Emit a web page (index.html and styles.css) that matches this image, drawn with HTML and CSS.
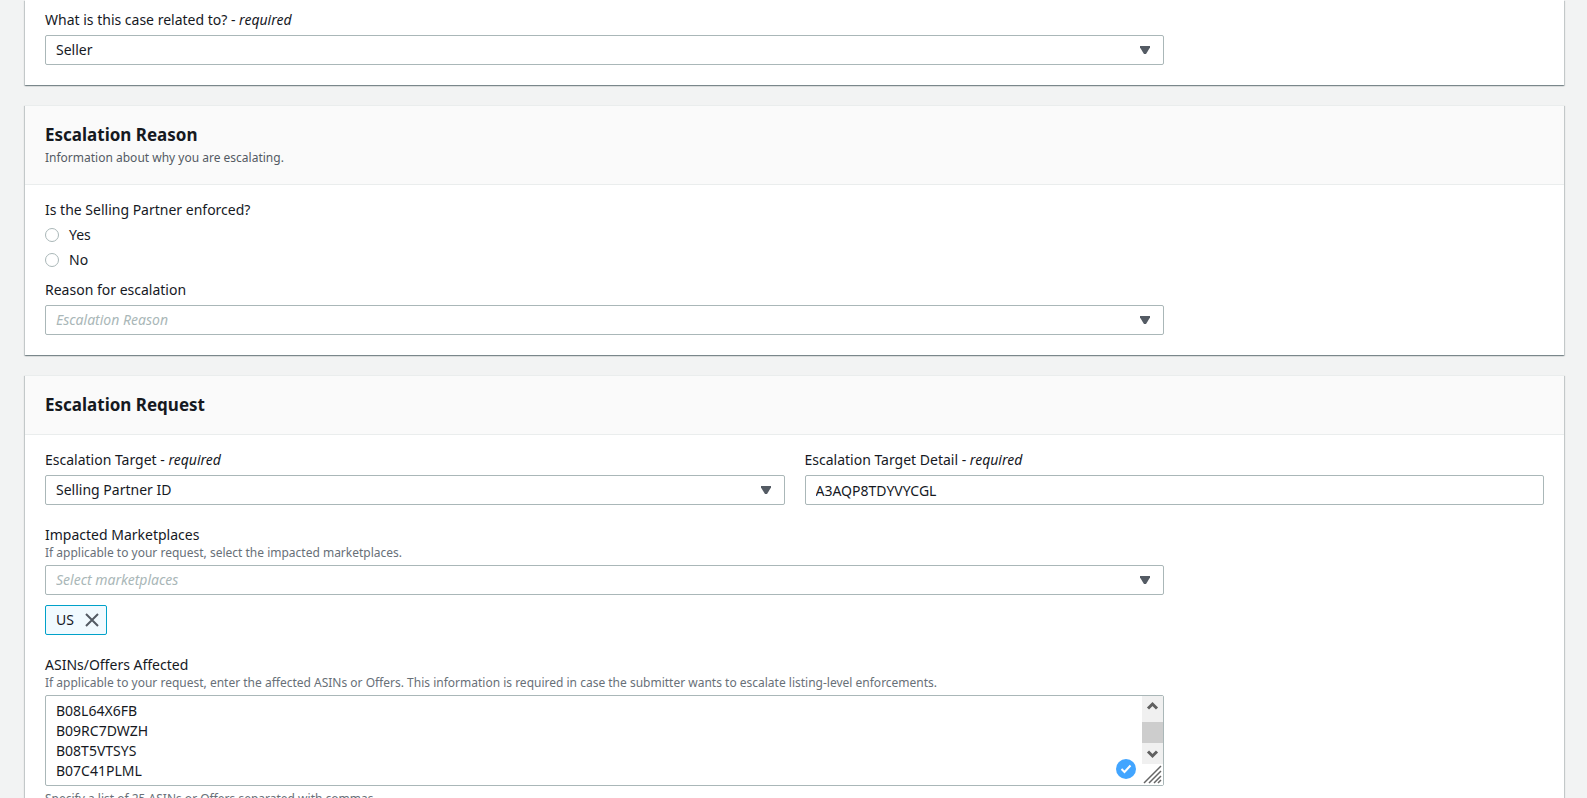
FILE: index.html
```
<!DOCTYPE html>
<html lang="en">
<head>
<meta charset="utf-8">
<meta name="viewport" content="width=device-width, initial-scale=1">
<title>Create escalation</title>
<link rel="stylesheet" href="styles.css">
</head>
<body>
<main class="page">
  <section class="panel panel-continued">
    <div class="panel-body">
      <div class="field field-wide">
        <label class="label" for="related">What is this case related to? - <em>required</em></label>
        <div class="select-wrap">
          <select class="control" id="related"><option>Seller</option></select>
          <svg class="caret" viewBox="0 0 10 8" aria-hidden="true"><path d="M0 0h10v1.500L6 8H4L0 1.500z"/></svg>
        </div>
      </div>
    </div>
  </section>

  <section class="panel">
    <header class="panel-header">
      <h2 class="panel-title">Escalation Reason</h2>
      <p class="panel-note">Information about why you are escalating.</p>
    </header>
    <div class="panel-body">
      <fieldset class="choices">
        <legend class="label">Is the Selling Partner enforced?</legend>
        <label class="choice"><input class="radio" type="radio" name="enforced" value="yes">Yes</label>
        <label class="choice"><input class="radio" type="radio" name="enforced" value="no">No</label>
      </fieldset>
      <div class="field field-wide">
        <label class="label" for="reason">Reason for escalation</label>
        <div class="select-wrap">
          <select class="control is-empty" id="reason"><option>Escalation Reason</option></select>
          <svg class="caret" viewBox="0 0 10 8" aria-hidden="true"><path d="M0 0h10v1.500L6 8H4L0 1.500z"/></svg>
        </div>
      </div>
    </div>
  </section>

  <section class="panel">
    <header class="panel-header">
      <h2 class="panel-title">Escalation Request</h2>
    </header>
    <div class="panel-body panel-stack">
      <div class="columns">
        <div class="field">
          <label class="label" for="target">Escalation Target - <em>required</em></label>
          <div class="select-wrap">
            <select class="control" id="target"><option>Selling Partner ID</option></select>
            <svg class="caret" viewBox="0 0 10 8" aria-hidden="true"><path d="M0 0h10v1.500L6 8H4L0 1.500z"/></svg>
          </div>
        </div>
        <div class="field">
          <label class="label" for="detail">Escalation Target Detail - <em>required</em></label>
          <input class="control" id="detail" type="text" value="A3AQP8TDYVYCGL">
        </div>
      </div>

      <div class="field field-wide">
        <label class="label label-tight" for="markets">Impacted Marketplaces</label>
        <p class="hint">If applicable to your request, select the impacted marketplaces.</p>
        <div class="select-wrap">
          <select class="control is-empty" id="markets"><option>Select marketplaces</option></select>
          <svg class="caret" viewBox="0 0 10 8" aria-hidden="true"><path d="M0 0h10v1.500L6 8H4L0 1.500z"/></svg>
        </div>
        <div class="tokens">
          <span class="token">US
            <button class="token-remove" type="button" aria-label="Remove US">
              <svg class="token-icon" viewBox="0 0 14 14" aria-hidden="true"><path d="M1 1l12 12M13 1L1 13"/></svg>
            </button>
          </span>
        </div>
      </div>

      <div class="field field-wide">
        <label class="label label-tight" for="asins">ASINs/Offers Affected</label>
        <p class="hint">If applicable to your request, enter the affected ASINs or Offers. This information is required in case the submitter wants to escalate listing-level enforcements.</p>
        <div class="area-wrap">
          <textarea class="control area" id="asins" spellcheck="false">
B08L64X6FB
B09RC7DWZH
B08T5VTSYS
B07C41PLML</textarea>
          <svg class="area-check" viewBox="0 0 20 20" aria-hidden="true"><circle cx="10" cy="10" r="10"/><path d="M5.500 10l3 3 6-6.500"/></svg>
          <div class="scroller" aria-hidden="true">
            <svg class="scroll-arrow" viewBox="0 0 21 21"><path d="M6 12.500L10.500 8l4.500 4.500"/></svg>
            <div class="scroll-thumb"></div>
            <svg class="scroll-arrow" viewBox="0 0 21 21"><path d="M6 8.500l4.500 4.500L15 8.500"/></svg>
            <svg class="grip" viewBox="0 0 21 21"><path d="M2 19L19 2M7 19L19 7M12 19l7-7M16 19l3-3"/></svg>
          </div>
        </div>
        <p class="hint hint-below">Specify a list of 25 ASINs or Offers separated with commas.</p>
      </div>
    </div>
  </section>
</main>
</body>
</html>
```
FILE: styles.css
```
* {
  box-sizing: border-box;
}

body {
  margin: 0;
  height: 100vh;
  overflow: hidden;
  background: #f2f3f3;
  color: #16191f;
  font: 14px/20px "Noto Sans", "Open Sans", sans-serif;
}

.page {
  display: flex;
  flex-direction: column;
  gap: 20px;
  padding: 0 23px 0 25px;
}

.panel {
  background: #fff;
  border-top: 1px solid #eaeded;
  box-shadow: 0 1px 1px 0 rgba(0, 28, 36, 0.3), 1px 1px 1px 0 rgba(0, 28, 36, 0.15), -1px 1px 1px 0 rgba(0, 28, 36, 0.15);
}

.panel-continued {
  border-top: 0;
}

.panel-continued .panel-body {
  padding-top: 10px;
}

.panel-header {
  padding: 17px 20px;
  background: #fafafa;
  border-bottom: 1px solid #eaeded;
}

.panel-title {
  margin: 0;
  font-size: 17px;
  line-height: 24px;
  font-weight: 700;
}

.panel-note {
  margin: 3px 0 1px;
  color: #545b64;
  font-size: 12px;
  line-height: 16px;
}

.panel-body {
  padding: 15px 20px 20px;
}

.panel-stack {
  display: flex;
  flex-direction: column;
  gap: 20px;
}

.columns {
  display: grid;
  grid-template-columns: 1fr 1fr;
  gap: 20px;
}

.field {
  min-width: 0;
}

.field-wide {
  width: calc(75% - 5px);
}

.label {
  display: block;
  margin-bottom: 5px;
  padding: 0;
}

.label-tight {
  margin-bottom: 0;
}

.hint {
  margin: 0 0 5px;
  color: #687078;
  font-size: 12px;
  line-height: 15px;
}

.hint-below {
  margin: 5px 0;
}

.control {
  display: block;
  width: 100%;
  height: 30px;
  margin: 0;
  padding: 4px 10px;
  border: 1px solid #aab7b8;
  border-radius: 2px;
  background: #fff;
  color: #16191f;
  font: inherit;
  appearance: none;
}

.is-empty {
  color: #aab7b8;
  font-style: italic;
}

.select-wrap,
.area-wrap {
  position: relative;
}

.caret {
  position: absolute;
  top: 11px;
  right: 14px;
  width: 10px;
  height: 8px;
  fill: #545b64;
  pointer-events: none;
}

.choices {
  display: flex;
  flex-direction: column;
  gap: 5px;
  min-width: 0;
  margin: 0 0 10px;
  padding: 0;
  border: 0;
}

.choice {
  display: flex;
  align-items: center;
  gap: 10px;
}

.radio {
  width: 14px;
  height: 14px;
  margin: 0;
  border: 1px solid #aab7b8;
  border-radius: 50%;
  background: #fff;
  appearance: none;
}

.radio:checked {
  border: 4px solid #00a1c9;
}

.tokens {
  display: flex;
  gap: 10px;
  margin-top: 10px;
}

.token {
  display: flex;
  align-items: center;
  gap: 11px;
  height: 30px;
  padding: 0 7px 0 10px;
  border: 1px solid #00a1c9;
  border-radius: 2px;
  background: #f1faff;
}

.token-remove {
  display: flex;
  padding: 0;
  border: 0;
  background: none;
}

.token-icon {
  width: 14px;
  height: 14px;
  fill: none;
  stroke: #545b64;
  stroke-width: 2;
}

.area {
  height: 91px;
  padding: 5px 32px 4px 10px;
  resize: none;
  scrollbar-width: none;
}

.area-check {
  position: absolute;
  right: 28px;
  bottom: 7px;
  width: 20px;
  height: 20px;
  fill: #42a5ff;
}

.area-check path {
  fill: none;
  stroke: #fff;
  stroke-width: 2;
}

.scroller {
  position: absolute;
  top: 1px;
  right: 1px;
  bottom: 1px;
  display: flex;
  flex-direction: column;
  width: 21px;
  background: linear-gradient(#f0f0f0 68px, #fff 68px);
}

.scroll-arrow {
  width: 21px;
  height: 21px;
  fill: none;
  stroke: #606060;
  stroke-width: 3;
}

.scroll-thumb {
  height: 21px;
  margin-top: 5px;
  background: #cdcdcd;
}

.grip {
  width: 21px;
  height: 21px;
  fill: none;
  stroke: #666;
  stroke-width: 1.5;
}
```
